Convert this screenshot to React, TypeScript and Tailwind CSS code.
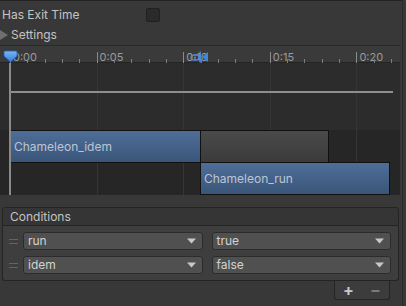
import React from "react";

const X0 = 10;
const PX_PER_SEC = 17.32;

const majors = [0, 5, 10, 15, 20];
const minors = Array.from({ length: 23 }, (_, i) => i).filter((s) => s % 5 !== 0);

function Dropdown({ value }: { value: string }) {
  return (
    <div className="flex-1 h-[18px] flex items-center justify-between rounded-[3px] border border-[#2c2c2c] bg-[#505050] pl-[4px] pr-[6px] text-[12px] text-[#d2d2d2]">
      <span className="leading-none">{value}</span>
      <svg width="9" height="6" viewBox="0 0 9 6">
        <path d="M0 0.5 L9 0.5 L4.5 5.5 Z" fill="#c8c8c8" />
      </svg>
    </div>
  );
}

function ConditionRow({ param, value }: { param: string; value: string }) {
  return (
    <div className="flex items-center h-[18px]">
      <div className="w-[20px] flex flex-col items-center gap-[3px] pl-[1px]">
        <div className="w-[9px] h-px bg-[#646464]" />
        <div className="w-[9px] h-px bg-[#646464]" />
      </div>
      <div className="flex flex-1 gap-[9px] pr-[7px]">
        <Dropdown value={param} />
        <Dropdown value={value} />
      </div>
    </div>
  );
}

function Timeline() {
  return (
    <div className="relative h-[150px] w-[400px] border-t border-[#2a2a2a] overflow-hidden">
      {/* ruler */}
      <div className="absolute left-0 top-0 w-[400px] h-[17px] bg-[#3a3a3a] border-b border-[#232323]" />
      {/* curve area */}
      <div className="absolute left-0 top-[17px] w-[400px] h-[67px] bg-[#2c2c2c]" />
      {/* clip area */}
      <div className="absolute left-0 top-[84px] w-[400px] h-[66px] bg-[#262626]" />

      {majors.slice(1).map((s) => (
        <div
          key={"g" + s}
          className="absolute top-[17px] w-px h-[133px] bg-[#353535]"
          style={{ left: X0 + s * PX_PER_SEC }}
        />
      ))}

      {majors.map((s) => (
        <div key={"m" + s}>
          <div
            className="absolute top-[6px] w-px h-[11px] bg-[#8c8c8c]"
            style={{ left: X0 + s * PX_PER_SEC }}
          />
          <span
            className="absolute top-[5px] text-[11px] leading-[12px] text-[#9a9a9a]"
            style={{ left: X0 + s * PX_PER_SEC + 3 }}
          >
            0:{s < 10 ? "0" + s : s}
          </span>
        </div>
      ))}
      {minors.map((s) => (
        <div
          key={"t" + s}
          className="absolute top-[13px] w-px h-[4px] bg-[#7c7c7c]"
          style={{ left: X0 + s * PX_PER_SEC }}
        />
      ))}

      {/* curve */}
      <div className="absolute left-[10px] top-[45px] w-[383px] h-[2px] bg-[#8e8e8e]" />

      {/* clips */}
      <div className="absolute left-[10px] top-[84px] w-[191px] h-[33px] border border-[#111] bg-gradient-to-b from-[#4e6e99] to-[#3a5579] flex items-center pl-[3px] text-[12px] text-[#bcc6d3]">
        Chameleon_idem
      </div>
      <div className="absolute left-[200px] top-[84px] w-[129px] h-[33px] border border-[#111] bg-gradient-to-b from-[#4a4a4a] to-[#3b3b3b]" />
      <div className="absolute left-[200px] top-[116px] w-[190px] h-[33px] border border-[#111] bg-gradient-to-b from-[#4e6e99] to-[#3a5579] flex items-center pl-[3px] text-[12px] text-[#bcc6d3]">
        Chameleon_run
      </div>

      {/* playhead */}
      <div className="absolute left-[9px] top-[17px] w-[2px] h-[133px] bg-[#8a8a8a]" />

      {/* start marker */}
      <svg className="absolute left-[3px] top-[4px]" width="15" height="13" viewBox="0 0 15 13">
        <defs>
          <linearGradient id="mk" x1="0" y1="0" x2="0" y2="1">
            <stop offset="0" stopColor="#7db4f5" />
            <stop offset="1" stopColor="#2f7fe0" />
          </linearGradient>
        </defs>
        <path d="M2 1 H13 Q14 1 14 2 V6 L7.5 12 L1 6 V2 Q1 1 2 1 Z" fill="url(#mk)" stroke="#1d5fb3" strokeWidth="0.8" />
      </svg>

      {/* transition markers */}
      <svg className="absolute left-[189px] top-[5px]" width="20" height="12" viewBox="0 0 20 12">
        <ellipse cx="6" cy="6.5" rx="4" ry="2.6" fill="none" stroke="#4a8fe6" strokeWidth="1.4" />
        <circle cx="6" cy="6.5" r="1" fill="#4a8fe6" />
        <rect x="10.5" y="0.5" width="1.4" height="11" fill="#4a8fe6" />
        <path d="M19 1 V11 L13 6 Z" fill="#3d86e2" />
      </svg>
    </div>
  );
}

export default function App() {
  return (
    <div className="w-[406px] h-[306px] bg-[#383838] overflow-hidden flex font-['Inter','Roboto',sans-serif]">
      <div className="w-[402px] flex flex-col border-t border-[#232323]">
        <div className="flex items-center h-[23px] pt-[4px]">
          <span className="w-[146px] pl-[2px] text-[12px] text-[#c4c4c4]">Has Exit Time</span>
          <div className="w-[14px] h-[14px] rounded-[2px] border border-[#212121] bg-[#2a2a2a]" />
        </div>
        <div className="flex items-center h-[21px] gap-[3px]">
          <svg width="8" height="10" viewBox="0 0 8 10">
            <path d="M0 0 L8 5 L0 10 Z" fill="#6f6f6f" />
          </svg>
          <span className="text-[12px] text-[#c4c4c4]">Settings</span>
        </div>

        <Timeline />

        <div className="mt-[12px] ml-[2px] w-[397px] flex flex-col">
          <div className="h-[19px] flex items-center pl-[7px] rounded-t-[3px] border border-[#242424] bg-[#353535] text-[12px] text-[#c4c4c4]">
            Conditions
          </div>
          <div className="flex flex-col gap-[6px] pt-[6px] pb-[6px] rounded-b-[3px] border border-t-0 border-[#242424] bg-[#3e3e3e]">
            <ConditionRow param="run" value="true" />
            <ConditionRow param="idem" value="false" />
          </div>
          <div className="flex justify-end pr-[9px]">
            <div className="w-[56px] h-[19px] flex items-center justify-around rounded-b-[3px] border border-t-0 border-[#242424] bg-[#3c3c3c]">
              <span className="text-[16px] leading-none font-bold text-[#c8c8c8]">+</span>
              <span className="text-[16px] leading-none font-bold text-[#7a7a7a]">−</span>
            </div>
          </div>
        </div>
      </div>
      <div className="w-[4px] border-l border-[#2a2a2a] bg-[#383838]" />
    </div>
  );
}
